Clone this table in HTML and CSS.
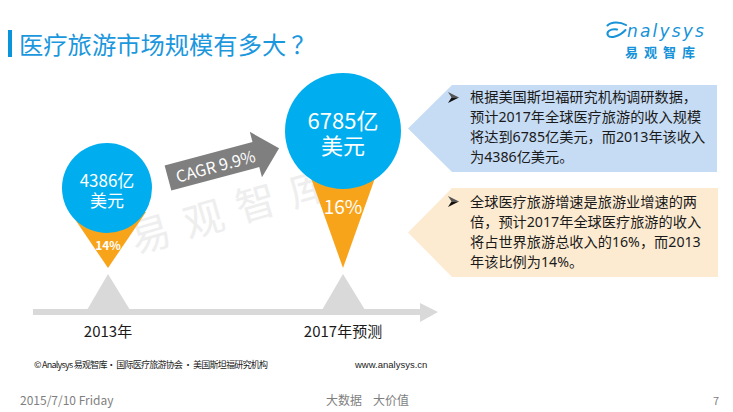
FILE: index.html
```html
<!DOCTYPE html>
<html lang="zh-CN">
<head>
<meta charset="utf-8">
<title>医疗旅游市场规模有多大？</title>
<link rel="stylesheet" href="styles.css">
</head>
<body>
<div class="slide">
  <header class="header">
    <h1 class="title">医疗旅游市场规模有多大<span class="qmark">？</span></h1>
    <div class="logo">
      <div class="logo-mark">
        <svg class="logo-swoosh" width="22" height="20" viewBox="0 0 22 20">
          <path d="M21 5 C15 1.5 6 1.5 2.5 5.5" />
          <path d="M12 9.5 C5 8.5 1 12 3 15.5 C5 18.5 14 17 20.5 10" />
        </svg>
        <span class="logo-word">nalysys</span>
      </div>
      <div class="logo-cn">易观智库</div>
    </div>
  </header>

  <main class="main">
    <div class="diagram-wrap">
      <svg class="diagram" width="408" height="283" viewBox="0 62 408 283">
        <g class="watermark">
          <text x="150" y="232" transform="rotate(-16 150 232)">易</text>
          <text x="203" y="217" transform="rotate(-16 203 217)">观</text>
          <text x="255" y="201" transform="rotate(-16 255 201)">智</text>
          <text x="308" y="186" transform="rotate(-16 308 186)">库</text>
        </g>

        <rect class="axis" x="33" y="309" width="388" height="6" />
        <polygon class="axis" points="420,303 438,312 420,322" />
        <polygon class="axis" points="87,310 130,310 108,274" />
        <polygon class="axis" points="322,310 365,310 343,274" />

        <polygon class="cone" points="70,212 146,212 108,268" />
        <circle class="bubble" cx="107" cy="188" r="45" />
        <text class="cone-text small-pct" x="108" y="244">14%</text>

        <polygon class="cone" points="301,150 385,150 343,268" />
        <circle class="bubble" cx="343" cy="131" r="58" />
        <text class="cone-text big-pct" x="343" y="205">16%</text>

        <g transform="translate(224 163) rotate(-15)">
          <polygon class="cagr" points="-58,-13 33,-13 33,-23.5 57,0 33,23.5 33,13 -58,13" />
          <text class="cagr-text" x="-9" y="0">CAGR 9.9%</text>
        </g>

        <text class="year" x="108" y="330">2013年</text>
        <text class="year" x="343" y="330">2017年预测</text>
      </svg>
      <div class="bubble-label label-small">4386亿<br>美元</div>
      <div class="bubble-label label-big">6785亿<br>美元</div>
    </div>

    <div class="notes">
      <div class="note note-blue">
        <svg class="bullet" width="11" height="11" viewBox="0 0 11 11">
          <polygon points="0,0 11,5.5 3.5,5.5" fill="#555" />
          <polygon points="0,11 11,5.5 3.5,5.5" fill="#111" />
        </svg>
        <p>根据美国斯坦福研究机构调研数据，<br>预计2017年全球医疗旅游的收入规模<br>将达到6785亿美元，而2013年该收入<br>为4386亿美元。</p>
      </div>
      <div class="note note-orange">
        <svg class="bullet" width="11" height="11" viewBox="0 0 11 11">
          <polygon points="0,0 11,5.5 3.5,5.5" fill="#555" />
          <polygon points="0,11 11,5.5 3.5,5.5" fill="#111" />
        </svg>
        <p>全球医疗旅游增速是旅游业增速的两<br>倍，预计2017年全球医疗旅游的收入<br>将占世界旅游总收入的16%，而2013<br>年该比例为14%。</p>
      </div>
    </div>
  </main>

  <div class="source">
    <span class="source-text">© Analysys 易观智库· 国际医疗旅游协会 · 美国斯坦福研究机构</span>
    <span class="source-url">www.analysys.cn</span>
  </div>

  <footer class="footer">
    <span class="date">2015/7/10 Friday</span>
    <span class="slogan">大数据</span>
    <span class="slogan slogan-2">大价值</span>
    <span class="page">7</span>
  </footer>
</div>
</body>
</html>
```

FILE: styles.css
```css
* {
  box-sizing: border-box;
  margin: 0;
  padding: 0;
}

html,
body {
  width: 733px;
  height: 412px;
  background: #ffffff;
  overflow: hidden;
}

body {
  font-family: "Noto Sans CJK SC", "Noto Sans", sans-serif;
  color: #1a1a1a;
}

.slide {
  width: 733px;
  height: 412px;
  display: flex;
  flex-direction: column;
}

/* Header */
.header {
  height: 62px;
  display: flex;
  justify-content: space-between;
  align-items: flex-start;
  flex: none;
}

.title {
  margin: 30px 0 0 8px;
  border-left: 4px solid #0a94dc;
  padding-left: 7px;
  height: 27px;
  line-height: 27px;
  font-size: 24.3px;
  font-weight: normal;
  color: #1b97dd;
  white-space: nowrap;
}

.qmark {
  margin-left: 5px;
}

.logo {
  margin: 17px 22px 0 0;
  width: 106px;
  display: flex;
  flex-direction: column;
  align-items: flex-start;
}

.logo-mark {
  display: flex;
  align-items: flex-end;
  height: 24px;
}

.logo-swoosh {
  flex: none;
  margin-bottom: 1px;
}

.logo-swoosh path {
  fill: none;
  stroke: #1592d8;
  stroke-width: 2;
  stroke-linecap: round;
}

.logo-word {
  font-family: "DejaVu Sans", sans-serif;
  font-style: italic;
  font-size: 17px;
  line-height: 20px;
  letter-spacing: 2.2px;
  color: #1592d8;
}

.logo-cn {
  margin: 3px 0 0 20px;
  font-size: 13px;
  line-height: 16px;
  font-weight: bold;
  letter-spacing: 6px;
  color: #1592d8;
}

/* Main */
.main {
  height: 283px;
  display: flex;
  flex: none;
}

.diagram-wrap {
  position: relative;
  width: 408px;
  height: 283px;
  flex: none;
}

.diagram {
  display: block;
  overflow: visible;
}

.bubble-label {
  position: absolute;
  width: 100px;
  text-align: center;
  color: #ffffff;
  white-space: nowrap;
}

.label-small {
  left: 57px;
  top: 108px;
  font-size: 17px;
  line-height: 20px;
}

.label-big {
  left: 293px;
  top: 44.5px;
  font-size: 22px;
  line-height: 25px;
}

.watermark text {
  font-size: 40px;
  fill: #eeeeee;
  text-anchor: middle;
  dominant-baseline: central;
}

.axis {
  fill: #d9d9d9;
}

.cone {
  fill: #f8a41b;
}

.bubble {
  fill: #00aeef;
}

.cone-text,
.cagr-text,
.year {
  text-anchor: middle;
  dominant-baseline: central;
}

.cone-text {
  fill: #ffffff;
}

.small-pct {
  font-size: 12px;
  font-weight: bold;
}

.big-pct {
  font-size: 19px;
}

.cagr {
  fill: #7f7f7f;
}

.cagr-text {
  fill: #ffffff;
  font-size: 16px;
}

.year {
  font-size: 15px;
  fill: #1a1a1a;
}

/* Notes */
.notes {
  width: 310px;
  padding-top: 23px;
  display: flex;
  flex-direction: column;
  gap: 16px;
}

.note {
  display: flex;
  align-items: flex-start;
  padding-left: 40px;
  clip-path: polygon(44px 0, 100% 0, 100% 100%, 44px 100%, 0 50%);
}

.note-blue {
  width: 309px;
  height: 87px;
  padding-top: 2px;
  background: #c6dcf4;
}

.note-orange {
  width: 310px;
  height: 89px;
  padding-top: 3.5px;
  background: #fdebd1;
}

.bullet {
  flex: none;
  margin: 4.5px 11px 0 0;
}

.note p {
  font-family: "Noto Sans", "Noto Sans CJK SC", sans-serif;
  font-size: 14.2px;
  line-height: 20px;
  color: #1a1a1a;
  white-space: nowrap;
}

/* Source */
.source {
  margin-top: 10px;
  height: 20px;
  display: flex;
  align-items: center;
  padding-left: 34px;
  font-size: 9px;
  line-height: 20px;
  color: #222222;
  flex: none;
}

.source-text {
  width: 321px;
  white-space: nowrap;
  letter-spacing: -0.75px;
}

.source-url {
  font-family: "Liberation Sans", sans-serif;
  font-size: 9.5px;
}

/* Footer */
.footer {
  margin-top: 15px;
  height: 20px;
  display: flex;
  align-items: center;
  font-size: 12px;
  line-height: 20px;
  color: #7f7f7f;
  flex: none;
}

.date {
  width: 326px;
  padding-left: 20px;
}

.slogan {
  width: 47px;
}

.slogan-2 {
  width: 340px;
}

.page {
  font-size: 11px;
}
```
